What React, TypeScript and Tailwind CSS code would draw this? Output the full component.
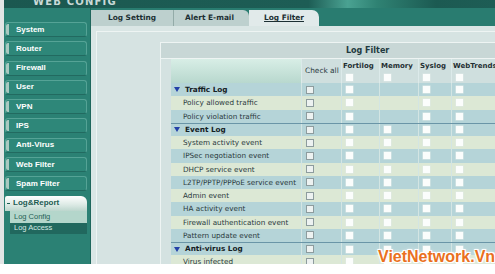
import React from "react"

type Row = {
  label: string
  group?: boolean
  tone: "blue" | "cream"
  memory?: boolean
  divider?: boolean
}

const menu = ["System", "Router", "Firewall", "User", "VPN", "IPS", "Anti-Virus", "Web Filter", "Spam Filter"]

const rows: Row[] = [
  { label: "Traffic Log", group: true, tone: "blue", memory: false },
  { label: "Policy allowed traffic", tone: "cream", memory: false },
  { label: "Policy violation traffic", tone: "blue", memory: false },
  { label: "Event Log", group: true, tone: "blue", divider: true },
  { label: "System activity event", tone: "cream" },
  { label: "IPSec negotiation event", tone: "blue" },
  { label: "DHCP service event", tone: "cream" },
  { label: "L2TP/PPTP/PPPoE service event", tone: "blue" },
  { label: "Admin event", tone: "cream" },
  { label: "HA activity event", tone: "blue" },
  { label: "Firewall authentication event", tone: "cream" },
  { label: "Pattern update event", tone: "blue" },
  { label: "Anti-virus Log", group: true, tone: "blue", divider: true },
  { label: "Virus infected", tone: "cream" },
]

const cols = [
  { name: "Fortilog", w: "w-[38px]" },
  { name: "Memory", w: "w-[39px]" },
  { name: "Syslog", w: "w-[33px]" },
  { name: "WebTrends", w: "w-[60px]" },
]

function Box() {
  return <span className="block w-[7px] h-[7px] bg-[#fbfdfc] shadow-[0_0_0_0.5px_#dfe9e8]" />
}

function CheckAllBox() {
  return <span className="block w-[8px] h-[8px] border border-[#8d9c9e] bg-[#edf2f1]" />
}

function Sidebar() {
  return (
    <div className="w-[87px] shrink-0 bg-[#2b8174] border-r border-[#1f665c] pt-[14px] pl-[1px] pr-[3px]">
      {menu.map((m) => (
        <div
          key={m}
          className="relative h-[15px] mb-[4.3px] rounded-[3px] border border-[#55a396] border-b-[#226a60] bg-[#2e8779] flex items-center pl-[10px]"
        >
          <span className="absolute left-[0px] top-[1px] bottom-[1px] w-[3px] rounded-l-[2px] bg-[#a9c9c1]" />
          <span className="font-['Liberation_Sans',sans-serif] font-bold text-[8px] text-white leading-none">{m}</span>
        </div>
      ))}
      <div className="h-[15px] rounded-t-[2px] rounded-tr-[6px] bg-[linear-gradient(180deg,#ffffff,#dbe9e4_60%,#bcd6cd)] flex items-center pl-[2px] gap-[3px]">
        <span className="w-[3px] h-[1px] bg-[#1d5c52]" />
        <span className="font-['Liberation_Sans',sans-serif] font-bold text-[8px] text-[#1d5c52] leading-none">Log&amp;Report</span>
      </div>
      <div className="ml-[5px] h-[12px] bg-[#b4d6cb] flex items-center pl-[4px]">
        <span className="font-['Liberation_Sans',sans-serif] text-[7.5px] text-[#245e55] leading-none">Log Config</span>
      </div>
      <div className="ml-[5px] h-[11px] bg-[#21685e] flex items-center pl-[4px]">
        <span className="font-['Liberation_Sans',sans-serif] text-[7.5px] text-[#d6ebe4] leading-none">Log Access</span>
      </div>
    </div>
  )
}

function Tabs() {
  return (
    <div className="h-[18px] shrink-0 bg-[#297c70] pt-[2px] flex items-end">
      <div className="w-[82px] h-[16px] bg-[#bdd0ce] flex items-center justify-center">
        <span className="font-bold text-[7.4px] text-[#1c2f33] leading-none">Log Setting</span>
      </div>
      <div className="w-[76px] h-[16px] bg-[#bdd0ce] border-l border-[#93aba8] rounded-tr-[6px] flex items-center justify-center pr-[4px]">
        <span className="font-bold text-[7.4px] text-[#1c2f33] leading-none">Alert E-mail</span>
      </div>
      <div className="w-[70px] h-[16px] bg-[#e1eaea] rounded-tr-[7px] flex items-center justify-center">
        <span className="font-bold text-[7.4px] text-[#1c2f33] leading-none underline underline-offset-1">Log Filter</span>
      </div>
    </div>
  )
}

function Table() {
  return (
    <div className="ml-[63px] mt-[10px] w-[420px] border-t border-l border-[#eef4f3]">
      <div className="h-[16px] bg-[#c8d7d6] border-b border-[#eef4f3] flex items-center pl-[185px]">
        <span className="font-bold text-[8px] text-[#1f3a40] leading-none">Log Filter</span>
      </div>
      <div className="bg-[#d4e2e1] pl-[10px]">
        {/* header row */}
        <div className="flex h-[24px]">
          <div className="w-[130px] bg-[linear-gradient(180deg,#d8eee6,#b8d8ce)]" />
          <div className="w-[40px] bg-[#cfdfde] border-l border-[#dceaea] flex items-center pl-[3px]">
            <span className="text-[7.4px] text-[#2a3a3e] leading-none">Check all</span>
          </div>
          {cols.map((c) => (
            <div key={c.name} className={`${c.w} bg-[#cfdfde] border-l border-[#dceaea] pt-[4px] flex flex-col`}>
              <span className="pl-[1px] font-bold text-[7px] text-[#1f2f33] leading-none">{c.name}</span>
              <span className="mt-[4px] pl-[4px]">
                <Box />
              </span>
            </div>
          ))}
        </div>
        {rows.map((r) => {
          const bg = r.tone === "blue" ? "bg-[#b5d4d8]" : "bg-[#dce8d5]"
          return (
            <div
              key={r.label}
              className={`flex h-[13.25px] ${bg} ${r.divider ? "border-t-[1.5px] border-[#6a95a7]" : ""}`}
            >
              <div className="w-[130px] flex items-center pl-[3px] gap-[5px]">
                {r.group ? (
                  <>
                    <svg width="6" height="5" viewBox="0 0 6 5" className="shrink-0">
                      <polygon points="0,0 6,0 3,5" fill="#2340a8" />
                    </svg>
                    <span className="font-bold text-[7.3px] text-[#142024] leading-none">{r.label}</span>
                  </>
                ) : (
                  <span className="pl-[9px] text-[7.25px] text-[#2b3a3d] leading-none whitespace-nowrap">{r.label}</span>
                )}
              </div>
              <div className="w-[40px] border-l border-[#d3e5e3] flex items-center pl-[4px]">
                <CheckAllBox />
              </div>
              {cols.map((c) => (
                <div key={c.name} className={`${c.w} border-l border-[#d3e5e3] flex items-center pl-[4px]`}>
                  {c.name === "Memory" && r.memory === false ? null : <Box />}
                </div>
              ))}
            </div>
          )
        })}
      </div>
    </div>
  )
}

export default function App() {
  return (
    <div className="relative w-[495px] h-[274px] overflow-hidden bg-white font-['DejaVu_Sans',sans-serif]">
      <div className="flex h-[264px]">
        <div className="w-[4px] shrink-0 bg-[#e2e5e5]" />
        <div className="flex-1 flex flex-col min-w-0">
          {/* top banner */}
          <div className="h-[8px] shrink-0 overflow-hidden bg-[linear-gradient(90deg,#1b5850_0%,#1d5d55_62%,#4aa292_70%,#2f8273_76%,#1c5a52_88%,#1e5d55_100%)] pl-[29px]">
            <span className="block -mt-[3px] font-bold text-[10px] tracking-[1.2px] text-[#c9d9d7] leading-none">WEB CONFIG</span>
          </div>
          <div className="flex flex-1 min-h-0">
            <Sidebar />
            <div className="flex-1 min-w-0 flex flex-col overflow-hidden">
              <Tabs />
              <div className="flex-1 bg-[#dae6e5] pt-[5px] pl-[5px] overflow-hidden">
                <div className="h-full border-t border-l border-[#eef4f3] bg-[#d6e3e2] overflow-hidden">
                  <Table />
                </div>
              </div>
            </div>
          </div>
        </div>
      </div>
      <span className="absolute left-[378px] top-[249px] font-['Liberation_Sans',sans-serif] font-bold text-[16px] leading-none text-[#ea7020] [text-shadow:0_0_2px_#fff,0_0_2px_#fff,0_0_4px_#fff,1px_1px_0_#fff,-1px_-1px_0_#fff,1px_-1px_0_#fff,-1px_1px_0_#fff]">
        VietNetwork.Vn
      </span>
    </div>
  )
}
